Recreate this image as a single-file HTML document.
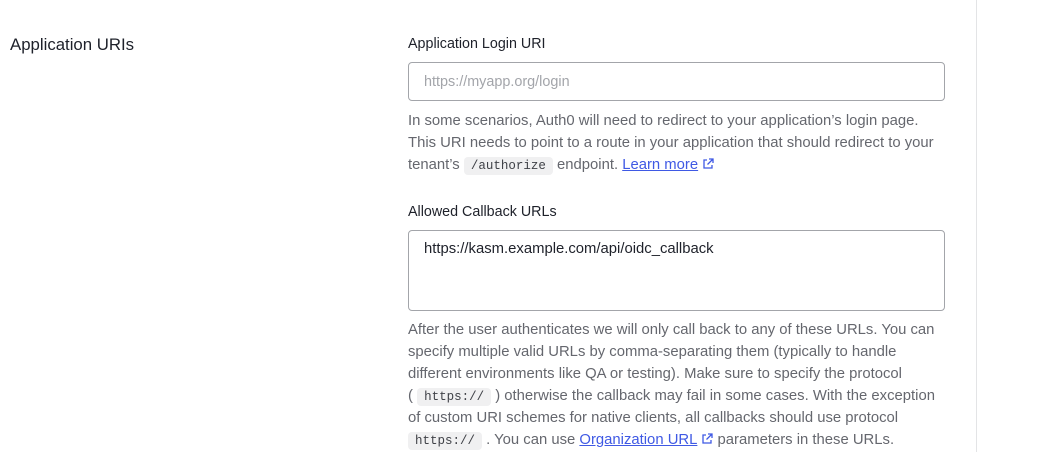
<!DOCTYPE html>
<html><head><meta charset="utf-8"><style>
body{margin:0;width:1064px;height:452px;background:#fff;position:relative;overflow:hidden;font-family:"Liberation Sans",Arial,sans-serif;}
.a{position:absolute;white-space:nowrap;}
.h{font-size:16.8px;color:#1e212a;}
.l{font-size:14.3px;color:#1e212a;}
.t{font-size:14.85px;color:#65676e;left:408px;}
.box{position:absolute;left:408px;width:535px;border:1px solid #a3a5aa;border-radius:4px;background:#fff;}
code{font-family:"Liberation Mono",monospace;font-size:12.5px;background:#f0f0f1;color:#3f4147;padding:2px 7px;border-radius:4px;}
a{color:#3f59e4;text-decoration:underline;}
.ic{display:inline-block;vertical-align:-1px;margin-left:4px}
</style></head><body>
<div style="position:absolute;left:976px;top:0;width:1px;height:452px;background:#e3e4e6"></div>
<div class="a h" style="left:10px;top:35px">Application URIs</div>
<div class="a l" style="left:408px;top:36px">Application Login URI</div>
<div class="box" style="top:62px;height:37px"></div>
<div class="a" style="left:424px;top:74px;font-size:14.4px;color:#a3a5aa">https://myapp.org/login</div>
<div class="a t" style="top:113px">In some scenarios, Auth0 will need to redirect to your application’s login page.</div>
<div class="a t" style="top:135px">This URI needs to point to a route in your application that should redirect to your</div>
<div class="a t" style="top:157px">tenant’s <code>/authorize</code> endpoint. <a>Learn more</a><svg class="ic" width="12" height="12" viewBox="0 0 12 12" fill="none" stroke="#3f59e4" stroke-width="1.3"><path d="M5 2H2v8h8V7M7 1h4v4M11 1L5.5 6.5"/></svg></div>
<div class="a l" style="left:408px;top:204px">Allowed Callback URLs</div>
<div class="box" style="top:230px;height:79px"></div>
<div class="a" style="left:424px;top:241px;font-size:14.85px;color:#1e212a">https://kasm.example.com/api/oidc_callback</div>
<div class="a t" style="top:322px">After the user authenticates we will only call back to any of these URLs. You can</div>
<div class="a t" style="top:344px">specify multiple valid URLs by comma-separating them (typically to handle</div>
<div class="a t" style="top:366px">different environments like QA or testing). Make sure to specify the protocol</div>
<div class="a t" style="top:388px">( <code>https://</code> ) otherwise the callback may fail in some cases. With the exception</div>
<div class="a t" style="top:410px">of custom URI schemes for native clients, all callbacks should use protocol</div>
<div class="a t" style="top:432px"><code>https://</code> . You can use <a>Organization URL</a><svg class="ic" width="12" height="12" viewBox="0 0 12 12" fill="none" stroke="#3f59e4" stroke-width="1.3"><path d="M5 2H2v8h8V7M7 1h4v4M11 1L5.5 6.5"/></svg> parameters in these URLs.</div>
</body></html>
